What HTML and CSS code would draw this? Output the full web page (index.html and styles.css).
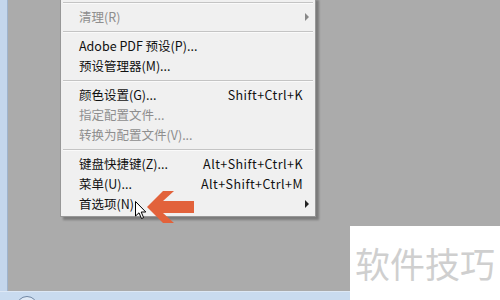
FILE: index.html
```html
<!DOCTYPE html>
<html lang="zh-CN">

<head>
  <meta charset="UTF-8">
  <title>编辑菜单</title>

  <link rel="stylesheet" href="styles.css">
</head>

<body>
  <div class="desktop">
    <div class="workspace">

      <!-- 编辑菜单（弹出） -->
      <ul class="menu">
        <li class="sep"></li>
        <li class="item disabled has-sub"><span>清理(R)</span></li>
        <li class="sep"></li>
        <li class="item"><span>Adobe PDF 预设(P)...</span></li>
        <li class="item"><span>预设管理器(M)...</span></li>
        <li class="sep"></li>
        <li class="item"><span>颜色设置(G)...</span><span class="key">Shift+Ctrl+K</span></li>
        <li class="item disabled"><span>指定配置文件...</span></li>
        <li class="item disabled"><span>转换为配置文件(V)...</span></li>
        <li class="sep"></li>
        <li class="item"><span>键盘快捷键(Z)...</span><span class="key">Alt+Shift+Ctrl+K</span></li>
        <li class="item"><span>菜单(U)...</span><span class="key">Alt+Shift+Ctrl+M</span></li>
        <li class="item has-sub"><span>首选项(N)</span></li>
      </ul>

      <svg class="cursor" width="12" height="19" viewBox="0 0 12 19">
        <path d="M0.5 0.5 L0.5 15 L4 11.8 L6.5 17.5 L8.6 16.6 L6.2 11 L10.8 11 Z" fill="#fff" stroke="#000" stroke-width="1" stroke-linejoin="round"/>
      </svg>

      <svg class="pointer" width="48" height="34" viewBox="0 0 48 34">
        <polygon points="0,17 16,1 27,1 16,11 47,11 47,23 16,23 27,33 16,33" fill="#e2623b"/>
      </svg>
    </div>
    <div class="taskbar">
      <span class="orb"></span>
    </div>

    <div class="watermark">软件技巧</div>
  </div>
</body>

</html>
```

FILE: styles.css
```css
body {
  margin: 0;
  padding: 0;
  width: 500px;
  height: 300px;
  overflow: hidden;
  font-family: 'Noto Sans CJK SC', 'Noto Sans', sans-serif;
}

.desktop {
  position: relative;
  width: 500px;
  height: 300px;
  display: flex;
  flex-direction: column;
  background: #c4d6ec;
}

.workspace {
  position: relative;
  flex: 1;
  margin-left: 7px;
  background: #ababab;
  border-left: 1px solid #9fb3cc;
}

.taskbar {
  height: 8px;
  position: relative;
  overflow: hidden;
  background: #c9dbef;
  border-top: 1px solid #dde8f5;
}

.orb {
  position: absolute;
  left: 16px;
  top: 4px;
  width: 20px;
  height: 20px;
  border-radius: 50%;
  border: 1px solid #6f86a3;
  background: #dfe9f5;
}

/* menu */
.menu {
  position: absolute;
  left: 52px;
  top: -3px;
  width: 254px;
  margin: 0;
  padding: 0 0 2px 0;
  list-style: none;
  background: #f0f0f0;
  border: 1px solid #979797;
  box-shadow: 3px 3px 2px rgba(0, 0, 0, 0.28);
  font-size: 12.5px;
  color: #111;
}

.sep {
  height: 9px;
  display: flex;
  align-items: center;
}

.sep::before {
  content: "";
  display: block;
  flex: 1;
  margin: 0 2px;
  height: 1px;
  background: #c4c4c4;
  box-shadow: 0 1px 0 #fafafa;
}

.item {
  height: 20px;
  line-height: 20px;
  display: flex;
  justify-content: space-between;
  padding: 0 12px 0 18px;
  position: relative;
}

.item.disabled {
  color: #8e8e8e;
}

.key {
  letter-spacing: 0.45px;
}

.has-sub::after {
  content: "";
  position: absolute;
  right: 6px;
  top: 6px;
  border-left: 4px solid #222;
  border-top: 4px solid transparent;
  border-bottom: 4px solid transparent;
}

.has-sub.disabled::after {
  border-left-color: #888;
}

.cursor {
  position: absolute;
  left: 127px;
  top: 201px;
}

.pointer {
  position: absolute;
  left: 139px;
  top: 190px;
}

.watermark {
  position: absolute;
  right: 0;
  bottom: 0;
  width: 150px;
  height: 74px;
  background: #fff;
  color: #cfcfcf;
  font-size: 35px;
  line-height: 74px;
  text-align: center;
  white-space: nowrap;
  overflow: hidden;
}
```
